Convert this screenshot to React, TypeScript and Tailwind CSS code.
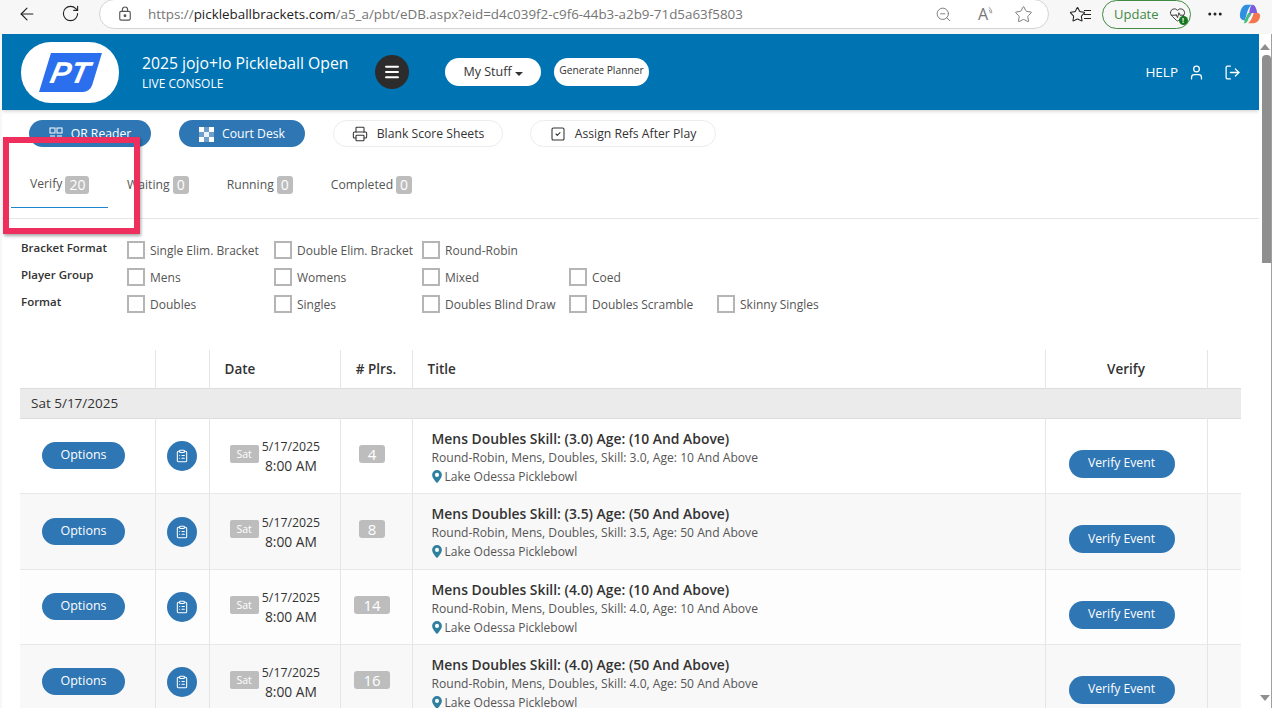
import {
  ArrowLeft,
  ClipboardList,
  HeartPulse,
  LogOut,
  Menu,
  MoreHorizontal,
  Printer,
  RotateCw,
  SquareCheck,
  Star,
  User,
  ZoomOut,
} from 'lucide-react';

const tabs = [
  { title: 'Verify', count: 20 },
  { title: 'Waiting', count: 0 },
  { title: 'Running', count: 0 },
  { title: 'Completed', count: 0 },
];

const filters = [
  {
    title: 'Bracket Format',
    items: ['Single Elim. Bracket', 'Double Elim. Bracket', 'Round-Robin'],
  },
  { title: 'Player Group', items: ['Mens', 'Womens', 'Mixed', 'Coed'] },
  {
    title: 'Format',
    items: [
      'Doubles',
      'Singles',
      'Doubles Blind Draw',
      'Doubles Scramble',
      'Skinny Singles',
    ],
  },
];

const rows = [
  { players: 4, skill: '3.0', age: '10', height: 'h-[75px]', bg: 'bg-white' },
  { players: 8, skill: '3.5', age: '50', height: 'h-[76px]', bg: 'bg-[#f8f8f8]' },
  { players: 14, skill: '4.0', age: '10', height: 'h-[75px]', bg: 'bg-[#fdfdfd]' },
  { players: 16, skill: '4.0', age: '50', height: 'h-[75px]', bg: 'bg-[#f8f8f8]' },
];

function BrowserBar() {
  return (
    <div className="flex h-[34px] items-start bg-[#f7f7f7] text-[#555]">
      <ArrowLeft className="mt-[4px] ml-[17px] size-[20px] text-[#222]" strokeWidth={1.4} />
      <RotateCw className="mt-[4px] ml-[24px] size-[19px] text-[#222]" strokeWidth={1.4} />
      <div className="ml-[19px] -mt-[1px] flex h-[30px] w-[950px] items-center rounded-[15px] border border-[#d4d4d4] bg-white pl-[18px]">
        <svg viewBox="0 0 16 18" className="h-[16px] w-[14px]" fill="none" stroke="#555" strokeWidth="1.3">
          <rect x="2" y="6" width="12" height="10" rx="1.5" />
          <path d="M5 6V4a3 3 0 0 1 6 0v2" />
          <circle cx="8" cy="11" r="1" fill="#555" />
        </svg>
        <span className="ml-[16px] text-[13.4px] text-[#757575]">
          https://<span className="text-[#222]">pickleballbrackets.com</span>
          /a5_a/pbt/eDB.aspx?eid=d4c039f2-c9f6-44b3-a2b9-71d5a63f5803
        </span>
        <ZoomOut className="ml-auto size-[17px] text-[#777]" strokeWidth={1.3} />
        <span className="ml-[26px] text-[16px] text-[#777]">A</span>
        <svg viewBox="0 0 8 12" className="mb-[6px] h-[10px] w-[6px]" fill="none" stroke="#777" strokeWidth="1">
          <path d="M1 1c3 2 4 5 4 8M1 4c1.500 1 2 3 2 5" />
        </svg>
        <Star className="mr-[15px] ml-[20px] size-[19px] text-[#777]" strokeWidth={1.2} />
      </div>
      <div className="relative mt-[6px] ml-[20px]">
        <Star className="size-[17px] text-[#222]" strokeWidth={1.5} />
        <span className="absolute top-[4px] -right-[5px] h-[9px] w-[7px] border-y border-[#222] after:absolute after:top-[2.500px] after:left-0 after:h-px after:w-full after:bg-[#222]" />
      </div>
      <div className="ml-[16px] flex h-[29px] w-[89px] items-center rounded-full border border-[#3f8a45] pl-[11px] text-[#3f8a45]">
        <span className="text-[13px]">Update</span>
        <div className="relative ml-[10px]">
          <HeartPulse className="size-[17px] text-[#333]" strokeWidth={1.3} />
          <span className="absolute -right-[2px] -bottom-[2px] flex size-[9px] items-center justify-center rounded-full bg-[#16751f] text-[7px] leading-none font-bold text-white">
            !
          </span>
        </div>
      </div>
      <MoreHorizontal className="mt-[5px] ml-[15px] size-[18px] text-[#222]" strokeWidth={2} />
      <svg viewBox="0 0 24 24" className="mt-[3px] ml-[15px] size-[22px]">
        <path d="M8 2h6c-3 2-5 7-6 12l-2 5c-3 0-5-2-5-5 0-6 3-12 7-12z" fill="#2f8fe0" />
        <path d="M14 2c3 0 4 2 5 5l1 4h-6l-3 5C11 9 12 4 14 2z" fill="#7c5ce0" />
        <path d="M16 22h-6c3-2 5-7 6-11h5c2 1 2 2 2 3 0 4-3 8-7 8z" fill="#f2774e" />
        <path d="M6 19l4-8h3l-3 7c-1 3-2 4-4 4H5c1-.500 1-2 1-3z" fill="#42c07b" />
      </svg>
    </div>
  );
}

function SiteHeader() {
  return (
    <header className="flex h-[76px] items-center bg-[#0073b3] text-white shadow-[0_1px_4px_rgba(0,0,0,0.2)]">
      <div className="ml-[19px] flex h-[61px] w-[98px] items-center justify-center rounded-[30px] bg-white">
        <div className="flex h-[39px] w-[51px] -skew-x-[17deg] items-center justify-center rounded-br-[7px] bg-[#2b6fee]">
          <span className="skew-x-[5deg] font-['Liberation_Sans',sans-serif] text-[30px] leading-none font-bold italic">
            PT
          </span>
        </div>
      </div>
      <div className="ml-[23px] w-[233px]">
        <div className="text-[15.75px] leading-[22px]">2025 jojo+lo Pickleball Open</div>
        <div className="pt-[1px] text-[12px] leading-[18px]">LIVE CONSOLE</div>
      </div>
      <button className="flex size-[34px] items-center justify-center rounded-full bg-[#2c2c2c]">
        <Menu className="size-[18px]" strokeWidth={2.6} />
      </button>
      <button className="ml-[36px] flex h-[28px] w-[96px] items-center justify-center rounded-full bg-white pt-[1px] text-[12.500px] font-medium text-[#333]">
        My Stuff
        <span className="mt-[2px] ml-[3px] h-0 w-0 border-x-[4px] border-t-[4px] border-x-transparent border-t-[#333]" />
      </button>
      <button className="ml-[13px] h-[28px] w-[95px] rounded-full bg-white pb-[2px] text-[10.300px] font-medium text-[#333]">
        Generate Planner
      </button>
      <span className="ml-auto text-[13.500px]">HELP</span>
      <User className="ml-[10px] size-[17px]" strokeWidth={1.8} />
      <LogOut className="mr-[18px] ml-[19px] size-[17px]" strokeWidth={1.8} />
    </header>
  );
}

function QrIcon() {
  return (
    <svg viewBox="0 0 14 14" className="size-[14px]" fill="none" stroke="white" strokeWidth="1">
      <rect x="1" y="1" width="5" height="5" />
      <rect x="8" y="1" width="5" height="5" />
      <path d="M1 9h5M8 9h5M1 12h5M8 12h5" />
    </svg>
  );
}

function CourtIcon() {
  return (
    <svg viewBox="0 0 15 15" className="size-[15px]" fill="white">
      <rect x="0" y="0" width="5" height="5" />
      <rect x="10" y="0" width="5" height="5" />
      <rect x="5" y="5" width="5" height="5" opacity="0.9" />
      <rect x="0" y="10" width="5" height="5" />
      <rect x="10" y="10" width="5" height="5" />
      <rect x="5" y="0" width="5" height="5" opacity="0.3" />
      <rect x="0" y="5" width="5" height="5" opacity="0.3" />
      <rect x="10" y="5" width="5" height="5" opacity="0.3" />
      <rect x="5" y="10" width="5" height="5" opacity="0.3" />
    </svg>
  );
}

function Toolbar() {
  const solid =
    'flex h-[27px] items-center justify-center gap-[8px] rounded-full bg-[#2f76b4] pt-[1px] text-[12.200px] font-medium text-white';
  const outline =
    'flex h-[27px] items-center justify-center gap-[9px] rounded-full border border-[#ececec] bg-white pt-[1px] text-[12.200px] font-medium text-[#333]';
  return (
    <div className="flex h-[37px] items-end pl-[27px]">
      <button className={`${solid} w-[122px]`}>
        <QrIcon />
        QR Reader
      </button>
      <button className={`${solid} ml-[28px] w-[126px]`}>
        <CourtIcon />
        Court Desk
      </button>
      <button className={`${outline} ml-[28px] w-[170px]`}>
        <Printer className="size-[16px]" strokeWidth={1.6} />
        Blank Score Sheets
      </button>
      <button className={`${outline} ml-[27px] w-[186px]`}>
        <SquareCheck className="size-[16px]" strokeWidth={1.6} />
        Assign Refs After Play
      </button>
    </div>
  );
}

function Tabs() {
  return (
    <div className="flex h-[72px] border-b border-[#e6e6e6] pt-[21px] pl-[9px]">
      {tabs.map((tab, index) => (
        <div
          key={tab.title}
          className={`flex h-[40px] items-center gap-[3px] px-[19px] pb-[6px] text-[12.200px] text-[#555] ${
            index === 0 ? 'w-[97px] border-b border-[#1c86cf]' : ''
          }`}
        >
          {tab.title}
          <span className="rounded-[3px] bg-[#bdbdbd] px-[4px] text-[14px] leading-[18px] text-white">
            {tab.count}
          </span>
        </div>
      ))}
    </div>
  );
}

function Filters() {
  return (
    <div className="grid grid-cols-[106px_147px_148px_147px_148px_auto] grid-rows-[27px_27px_27px] pt-[18px] pl-[19px] text-[12px] leading-[18px]">
      {filters.map((group) => (
        <div key={group.title} className="contents">
          <div className="pt-[2px] text-[11.500px] font-semibold text-[#333]">{group.title}</div>
          {group.items.map((item) => (
            <label key={item} className="flex items-start gap-[5px] pt-[4px] text-[#555]">
              <span className="size-[18px] border-2 border-[#b5b5b5] bg-white" />
              <span className="pt-[1px] whitespace-nowrap">{item}</span>
            </label>
          ))}
          {Array.from({ length: 5 - group.items.length }).map((_, index) => (
            <div key={index} />
          ))}
        </div>
      ))}
    </div>
  );
}

function EventsTable() {
  const head = 'border-r border-[#e5e5e5] align-middle text-[13.500px] font-semibold text-[#333]';
  const cell = 'border-r border-[#e5e5e5] p-0 align-middle';
  return (
    <table className="mt-[32px] ml-[18px] w-[1221px] table-fixed border-collapse">
      <colgroup>
        <col className="w-[135px]" />
        <col className="w-[54px]" />
        <col className="w-[131px]" />
        <col className="w-[72px]" />
        <col className="w-[633px]" />
        <col className="w-[162px]" />
        <col className="w-[34px]" />
      </colgroup>
      <thead>
        <tr className="h-[38px]">
          <th className={head} />
          <th className={head} />
          <th className={`${head} pl-[15px] text-left`}>Date</th>
          <th className={`${head} text-center`}># Plrs.</th>
          <th className={`${head} pl-[15px] text-left`}>Title</th>
          <th className={`${head} text-center`}>Verify</th>
          <th />
        </tr>
      </thead>
      <tbody>
        <tr className="h-[30px] border-y border-[#dcdcdc] bg-[#ebebeb]">
          <td colSpan={7} className="pl-[11px] text-[13.500px] text-[#333]">
            Sat 5/17/2025
          </td>
        </tr>
        {rows.map((row) => (
          <tr key={row.players} className={`${row.height} ${row.bg} border-b border-[#e8e8e8]`}>
            <td className={cell}>
              <button className="ml-[22px] block h-[27px] w-[83px] rounded-full bg-[#2f76b4] text-[12.500px] font-medium text-white">
                Options
              </button>
            </td>
            <td className={cell}>
              <div className="mt-[1px] ml-[11px] flex size-[30px] items-center justify-center rounded-full bg-[#2f76b4] text-white">
                <ClipboardList className="size-[14px]" strokeWidth={1.8} />
              </div>
            </td>
            <td className={cell}>
              <div className="flex items-center pl-[20px]">
                <span className="mt-[-4px] rounded-[2px] bg-[#bdbdbd] px-[7px] text-[10.500px] leading-[18px] text-white">
                  Sat
                </span>
                <div className="mt-[3px] ml-[3px] text-center text-[#333]">
                  <div className="text-[12.300px] leading-[18px]">5/17/2025</div>
                  <div className="text-[13.800px] leading-[20px]">8:00 AM</div>
                </div>
              </div>
            </td>
            <td className={cell}>
              <div className="flex justify-center pr-[8px]">
                <span className="-mt-[4px] rounded-[3px] bg-[#bdbdbd] px-[9px] text-[15px] leading-[18px] text-white">
                  {row.players}
                </span>
              </div>
            </td>
            <td className={`${cell} pt-[4px] pl-[19px]`}>
              <div className="text-[13.900px] leading-[18px] font-semibold text-[#333]">
                Mens Doubles Skill: ({row.skill}) Age: ({row.age} And Above)
              </div>
              <div className="text-[12.100px] leading-[19px] text-[#555]">
                Round-Robin, Mens, Doubles, Skill: {row.skill}, Age: {row.age} And Above
              </div>
              <div className="flex items-center gap-[3px] text-[12px] leading-[19px] text-[#555]">
                <svg viewBox="0 0 12 16" className="h-[13px] w-[10px]">
                  <path
                    fillRule="evenodd"
                    d="M6 0a6 6 0 0 1 6 6c0 4-6 10-6 10S0 10 0 6a6 6 0 0 1 6-6zm0 3.500a2.500 2.500 0 1 0 0 5 2.500 2.500 0 0 0 0-5z"
                    fill="#2f7f9f"
                  />
                </svg>
                Lake Odessa Picklebowl
              </div>
            </td>
            <td className={cell}>
              <button className="mt-[16px] ml-[23px] block h-[28px] w-[106px] rounded-full bg-[#2f76b4] text-[12.200px] font-medium text-white">
                Verify Event
              </button>
            </td>
            <td />
          </tr>
        ))}
      </tbody>
    </table>
  );
}

function Scrollbar() {
  return (
    <div className="flex w-[13px] flex-col items-end border-r border-[#a0a0a0] bg-white pt-[10px]">
      <div className="mr-[1px] h-0 w-0 border-x-[5px] border-b-[6px] border-x-transparent border-b-[#8f8f8f]" />
      <div className="mt-[5px] h-[208px] w-[9px] rounded-t-[4px] bg-[#8f8f8f]" />
      <div className="mt-auto mr-[1px] mb-[7px] h-0 w-0 border-x-[5px] border-t-[6px] border-x-transparent border-t-[#8f8f8f]" />
    </div>
  );
}

export default function App() {
  return (
    <div className="relative h-[708px] w-[1272px] overflow-hidden bg-[#f7f7f7] font-['Open_Sans','Noto_Sans',sans-serif]">
      <BrowserBar />
      <div className="flex h-[674px]">
        <main className="ml-[2px] w-[1257px] overflow-hidden bg-white">
          <SiteHeader />
          <Toolbar />
          <Tabs />
          <Filters />
          <EventsTable />
        </main>
        <Scrollbar />
      </div>
      <div className="absolute top-[137px] left-[3px] h-[97px] w-[137px] border-[6px] border-[#ee2f5e] shadow-[1px_2px_3px_rgba(0,0,0,0.35)]" />
    </div>
  );
}
